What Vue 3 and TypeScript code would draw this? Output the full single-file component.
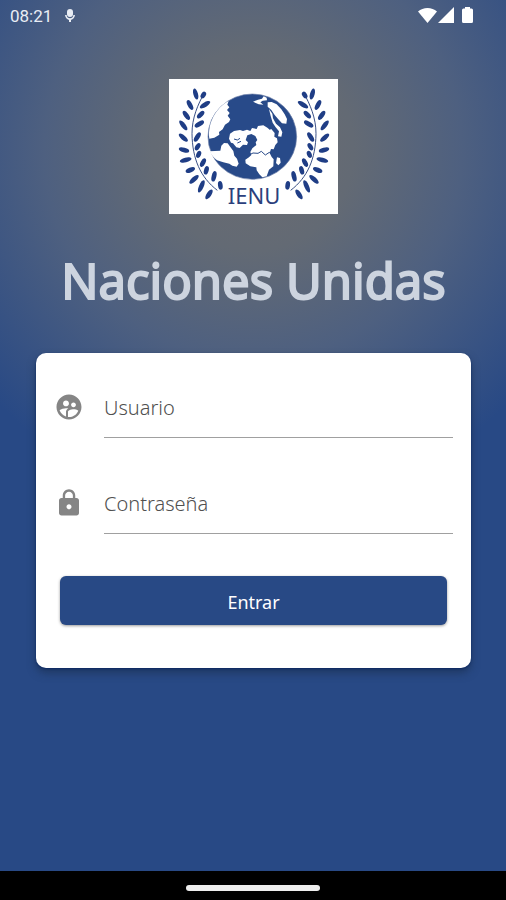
<script setup lang="ts">
import { ref } from 'vue'

interface Leaf {
  x: number
  y: number
  r: number
  size: number
}

const leaves: Leaf[] = [
  { x: 107, y: 73, r: -15, size: 17 },
  { x: 90, y: 106, r: -28, size: 16 },
  { x: 79, y: 137, r: -35, size: 16 },
  { x: 70, y: 167, r: -38, size: 18 },
  { x: 70, y: 204, r: -50, size: 17 },
  { x: 72, y: 241, r: -75, size: 16 },
  { x: 77, y: 271, r: 76, size: 18 },
  { x: 91, y: 301, r: 66, size: 15 },
  { x: 102, y: 329, r: 48, size: 18 },
  { x: 124, y: 350, r: 24, size: 20 },
  { x: 147, y: 374, r: 34, size: 17 },
  { x: 130, y: 76, r: 32, size: 11 },
  { x: 135, y: 105, r: 58, size: 18 },
  { x: 122, y: 135, r: 45, size: 14 },
  { x: 118, y: 163, r: 58, size: 16 },
  { x: 112, y: 202, r: 32, size: 16 },
  { x: 113, y: 231, r: 30, size: 12 },
  { x: 116, y: 254, r: 22, size: 11 },
  { x: 129, y: 279, r: 28, size: 14 },
  { x: 139, y: 302, r: 16, size: 13 },
  { x: 162, y: 320, r: 14, size: 16 },
  { x: 181, y: 347, r: -8, size: 13 },
]

const branches = ['', 'translate(564 0) scale(-1 1)']

const user = ref('')
const password = ref('')
</script>

<template>
  <div class="screen">
    <header class="status">
      <div class="status-group">
        <span>08:21</span>
        <svg class="mic" viewBox="0 0 12 16" aria-hidden="true">
          <rect x="3" y="1" width="6" height="8" rx="3" />
          <path d="M1 7h1.600c.3 2.100 1.600 3.200 3.400 3.200s3.100-1.100 3.400-3.200H11c-.3 2.700-1.900 4.500-4 4.900V14H5v-2.100C2.900 11.500 1.300 9.700 1 7z" />
        </svg>
      </div>
      <svg class="signals" viewBox="0 0 58 18" aria-hidden="true">
        <path d="M0 4.500C2.500 2.200 6 1 9.500 1S16.500 2.200 19 4.500L9.500 16z" />
        <path d="M36 0v16H20z" />
        <path d="M47 0h5v1.500h1.500q1.500 0 1.500 1.500v11.500q0 1.500-1.500 1.500h-8q-1.500 0-1.500-1.500V3q0-1.500 1.500-1.500H47z" />
      </svg>
    </header>

    <main class="content">
      <svg class="logo" viewBox="27 28 507 405" role="img" aria-label="IENU">
        <rect x="27" y="28" width="507" height="405" fill="#fff" />
        <g v-for="(mirror, i) in branches" :key="i" :transform="mirror">
          <path class="stem" d="M134 68C113 105 96 145 96 192C97 267 121 323 172 362" />
          <ellipse
            v-for="(leaf, j) in leaves"
            :key="j"
            :cx="leaf.x"
            :cy="leaf.y"
            rx="7"
            :ry="leaf.size"
            :transform="`rotate(${leaf.r} ${leaf.x} ${leaf.y})`"
          />
        </g>
        <ellipse class="globe" cx="277" cy="201" rx="133" ry="128" />
        <g class="land">
          <path d="M206 94L202 105L208 113L201 121L209 130L203 138L211 149L207 157L195 165L188 179L177 187L178 195L163 204L148 207C142 160 169 113 206 94z" />
          <path d="M149 245L181 243L184 228L192 220L203 221L211 232L220 244L223 258L231 267L236 282L230 291L217 288L208 282L190 278L171 272C161 265 153 254 149 245z" />
          <path d="M207 207L210 192L222 184L240 181L249 184L261 180L271 184L276 175L290 178L294 169L310 167L322 174L330 181L333 177L344 190L343 201L351 206L353 218L346 226L341 239L333 238L329 250L335 262L341 269L340 290L327 300L320 320L307 323L298 314L290 302L289 293L271 290L257 281L256 270L267 263L274 256L271 247L277 236L289 226L287 218L292 211L286 199L274 193L262 197L257 211L264 218L261 226L249 225L239 235L229 233L219 221L213 219z" />
          <path d="M323 98L335 97L350 104L364 119L374 134L381 148L379 162L366 161L355 149L344 136L334 121L323 111z" />
          <path d="M279 96L294 90L306 87L311 80L320 84L321 92L308 93L301 98L310 105L296 104z" />
          <path d="M327 118L337 132L339 146L348 162L360 173L367 188L364 201L354 200L357 185L347 173L338 159L332 139z" />
          <path d="M351 263L360 265L362 279L355 287L348 280z" />
        </g>
        <path class="coast" d="M222 208l10 3 8-5M232 220l11-5M269 255l10-5 15 1 10-6 12 11 12-8 5 5" />
        <text x="282" y="403" text-anchor="middle">IENU</text>
      </svg>

      <h1>Naciones Unidas</h1>

      <form class="card" @submit.prevent>
        <div class="row">
          <svg class="icon" viewBox="0 0 24 24" aria-hidden="true">
            <path d="M11.990 2c-5.520 0-10 4.480-10 10s4.480 10 10 10 10-4.480 10-10-4.480-10-10-10zm3.610 6.340c1.070 0 1.930.86 1.930 1.930 0 1.070-.86 1.930-1.930 1.930-1.070 0-1.930-.86-1.930-1.930-.01-1.070.86-1.930 1.930-1.930zm-6-1.580c1.300 0 2.360 1.060 2.360 2.360 0 1.300-1.060 2.360-2.360 2.360s-2.360-1.060-2.360-2.360c0-1.310 1.050-2.360 2.360-2.360zm0 9.130v3.750c-2.400-.75-4.300-2.600-5.140-4.960 1.050-1.120 3.670-1.690 5.140-1.690.53 0 1.200.08 1.900.22-1.640.87-1.900 2.020-1.900 2.680zM11.990 20c-.27 0-.53-.01-.79-.04v-4.070c0-1.420 2.940-2.130 4.400-2.130 1.070 0 2.920.39 3.840 1.150-1.170 2.970-4.060 5.090-7.450 5.090z" />
          </svg>
          <div class="field" :class="{ filled: user }">
            <label for="user">Usuario</label>
            <input id="user" v-model="user" type="text" autocomplete="username" />
          </div>
        </div>
        <div class="row">
          <svg class="icon" viewBox="0 0 24 24" aria-hidden="true">
            <path d="M18 8h-1V6c0-2.760-2.240-5-5-5S7 3.240 7 6v2H6c-1.100 0-2 .9-2 2v10c0 1.100.9 2 2 2h12c1.100 0 2-.9 2-2V10c0-1.100-.9-2-2-2zm-6 9c-1.100 0-2-.9-2-2s.9-2 2-2 2 .9 2 2-.9 2-2 2zm3.100-9H8.900V6c0-1.710 1.390-3.100 3.100-3.100s3.100 1.390 3.100 3.100v2z" />
          </svg>
          <div class="field" :class="{ filled: password }">
            <label for="password">Contraseña</label>
            <input id="password" v-model="password" type="password" autocomplete="current-password" />
          </div>
        </div>
        <button type="submit">Entrar</button>
      </form>
    </main>

    <footer class="nav"><span class="handle"></span></footer>
  </div>
</template>

<style>
body {
  margin: 0;
}
</style>

<style scoped>
.screen {
  display: flex;
  flex-direction: column;
  min-height: 100vh;
  background: radial-gradient(circle 360px at 50% 150px, #6c6c72 0%, #636a74 28%, #4e6080 58%, #284985 100%) #284985;
  font-family: "Noto Sans", "Open Sans", sans-serif;
}

.status {
  display: flex;
  justify-content: space-between;
  align-items: center;
  height: 32px;
  padding: 0 30px 0 10px;
  color: #e9edf4;
  font: 17px/32px Roboto, sans-serif;
}

.status-group {
  display: flex;
  align-items: center;
  gap: 12px;
}

.mic {
  width: 12px;
  height: 16px;
  fill: #e9edf4;
}

.signals {
  width: 58px;
  height: 18px;
  fill: #fff;
}

.content {
  flex: 1;
  display: flex;
  flex-direction: column;
  align-items: center;
  padding: 47px 35px 40px 36px;
}

.logo {
  display: block;
  width: 169px;
  height: 135px;
  fill: #1f3d85;
}

.stem {
  fill: none;
  stroke: #3a5085;
  stroke-width: 3;
}

.globe {
  fill: #284a89;
  stroke: #6d7fa8;
  stroke-width: 2;
}

.land {
  fill: #fff;
}

.coast {
  fill: none;
  stroke: #284a89;
  stroke-width: 3;
}

.logo text {
  font: 66px "Noto Sans", sans-serif;
  fill: #2b3f7c;
}

h1 {
  margin: 30px 0 37px;
  color: #cdd4df;
  font-size: 49px;
  font-weight: 400;
  line-height: 72px;
  text-align: center;
  -webkit-text-stroke: 2px #cdd4df;
}

.card {
  box-sizing: border-box;
  width: 100%;
  padding: 29px 18px 43px;
  border-radius: 10px;
  background: #fff;
  box-shadow: 0 1px 2px #0b2863, 0 5px 8px rgba(25, 45, 75, 0.6);
}

.row {
  display: flex;
  align-items: flex-start;
  gap: 20px;
  margin-bottom: 40px;
}

.row:last-of-type {
  margin-bottom: 42px;
}

.icon {
  flex: none;
  width: 30px;
  height: 30px;
  margin-top: 10px;
  fill: #858585;
}

.field {
  flex: 1;
  display: grid;
  min-width: 0;
  border-bottom: 1px solid #a0a0a0;
}

.field label,
.field input {
  grid-area: 1 / 1;
}

.field label {
  color: #505050;
  font-size: 20px;
  font-weight: 300;
  line-height: 52px;
  transition: translate 0.15s;
}

.field:focus-within label,
.field.filled label {
  translate: 0 -24px;
}

.field input {
  box-sizing: border-box;
  width: 100%;
  height: 55px;
  padding: 0;
  border: 0;
  outline: 0;
  background: transparent;
  font: inherit;
  font-size: 20px;
}

button {
  display: block;
  width: calc(100% - 12px);
  height: 49px;
  margin: 0 0 0 6px;
  padding: 2px 0 0;
  border: 0;
  border-radius: 6px;
  background: #284985;
  box-shadow: 0 1px 3px rgba(0, 0, 0, 0.4);
  color: #fff;
  font: 400 18px "Noto Sans", sans-serif;
}

.nav {
  display: flex;
  justify-content: center;
  align-items: center;
  height: 29px;
  padding-top: 4px;
  box-sizing: border-box;
  background: #000;
}

.handle {
  width: 134px;
  height: 6px;
  border-radius: 3px;
  background: #eee;
}
</style>
